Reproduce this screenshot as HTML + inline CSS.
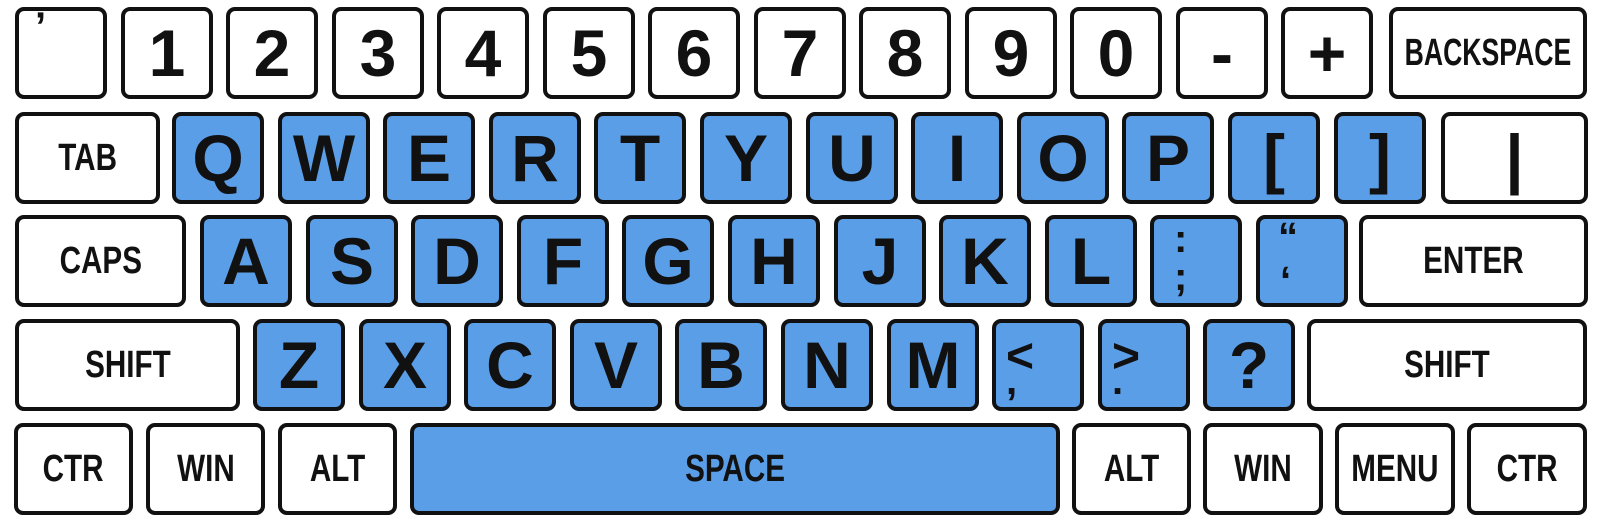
<!DOCTYPE html>
<html><head><meta charset="utf-8"><style>
body{margin:0;width:1600px;height:528px;background:#fff;position:relative;overflow:hidden;font-family:"Liberation Sans",sans-serif;}
.k{position:absolute;box-sizing:border-box;height:92px;border:4px solid #111;border-radius:9px;background:#fff;display:flex;align-items:center;justify-content:center;color:#111;font-weight:bold;}
.b{background:#5b9ee8;}
.L{font-size:66px;}
.L::first-line{}
.s{font-size:38px;display:inline-block;transform:scaleX(0.78);}
.r1{top:7px}.r2{top:112px}.r3{top:215px}.r4{top:319px}.r5{top:423px}
.w{width:92px}
.sm{position:absolute;font-size:40px;font-weight:bold;}
</style></head><body>
<div class="k r1 w" style="left:15px"><span class="sm" style="left:16px;top:-6px">’</span></div>
<div class="k r1 w L" style="left:121px">1</div>
<div class="k r1 w L" style="left:226px">2</div>
<div class="k r1 w L" style="left:332px">3</div>
<div class="k r1 w L" style="left:437px">4</div>
<div class="k r1 w L" style="left:543px">5</div>
<div class="k r1 w L" style="left:648px">6</div>
<div class="k r1 w L" style="left:754px">7</div>
<div class="k r1 w L" style="left:859px">8</div>
<div class="k r1 w L" style="left:965px">9</div>
<div class="k r1 w L" style="left:1070px">0</div>
<div class="k r1 w L" style="left:1176px">-</div>
<div class="k r1 w L" style="left:1281px">+</div>
<div class="k r1" style="left:1389px;width:198px"><span class="s" style="transform:scaleX(0.7)">BACKSPACE</span></div>

<div class="k r2" style="left:15px;width:145px"><span class="s">TAB</span></div>
<div class="k r2 w b L" style="left:172px">Q</div>
<div class="k r2 w b L" style="left:278px">W</div>
<div class="k r2 w b L" style="left:383px">E</div>
<div class="k r2 w b L" style="left:489px">R</div>
<div class="k r2 w b L" style="left:594px">T</div>
<div class="k r2 w b L" style="left:700px">Y</div>
<div class="k r2 w b L" style="left:806px">U</div>
<div class="k r2 w b L" style="left:911px">I</div>
<div class="k r2 w b L" style="left:1017px">O</div>
<div class="k r2 w b L" style="left:1122px">P</div>
<div class="k r2 w b L" style="left:1228px">[</div>
<div class="k r2 w b L" style="left:1334px">]</div>
<div class="k r2 L" style="left:1441px;width:147px">|</div>

<div class="k r3" style="left:15px;width:171px"><span class="s">CAPS</span></div>
<div class="k r3 w b L" style="left:200px">A</div>
<div class="k r3 w b L" style="left:306px">S</div>
<div class="k r3 w b L" style="left:411px">D</div>
<div class="k r3 w b L" style="left:517px">F</div>
<div class="k r3 w b L" style="left:622px">G</div>
<div class="k r3 w b L" style="left:728px">H</div>
<div class="k r3 w b L" style="left:834px">J</div>
<div class="k r3 w b L" style="left:939px">K</div>
<div class="k r3 w b L" style="left:1045px">L</div>
<div class="k r3 w b" style="left:1150px"><span class="sm" style="left:20px;top:-2px">:</span><span class="sm" style="left:20px;top:36px">;</span></div>
<div class="k r3 w b" style="left:1256px"><span class="sm" style="left:18px;top:-4px">“</span><span class="sm" style="left:20px;top:40px">‘</span></div>
<div class="k r3" style="left:1359px;width:229px"><span class="s">ENTER</span></div>

<div class="k r4" style="left:15px;width:225px"><span class="s">SHIFT</span></div>
<div class="k r4 w b L" style="left:253px">Z</div>
<div class="k r4 w b L" style="left:359px">X</div>
<div class="k r4 w b L" style="left:464px">C</div>
<div class="k r4 w b L" style="left:570px">V</div>
<div class="k r4 w b L" style="left:675px">B</div>
<div class="k r4 w b L" style="left:781px">N</div>
<div class="k r4 w b L" style="left:887px">M</div>
<div class="k r4 w b" style="left:992px"><span class="sm" style="left:10px;top:6px;font-size:48px">&lt;</span><span class="sm" style="left:10px;top:36px">,</span></div>
<div class="k r4 w b" style="left:1098px"><span class="sm" style="left:10px;top:6px;font-size:48px">&gt;</span><span class="sm" style="left:10px;top:36px">.</span></div>
<div class="k r4 w b L" style="left:1203px">?</div>
<div class="k r4" style="left:1307px;width:280px"><span class="s">SHIFT</span></div>

<div class="k r5" style="left:14px;width:119px"><span class="s">CTR</span></div>
<div class="k r5" style="left:146px;width:119px"><span class="s">WIN</span></div>
<div class="k r5" style="left:278px;width:119px"><span class="s">ALT</span></div>
<div class="k r5 b" style="left:410px;width:650px"><span class="s">SPACE</span></div>
<div class="k r5" style="left:1072px;width:119px"><span class="s">ALT</span></div>
<div class="k r5" style="left:1203px;width:120px"><span class="s">WIN</span></div>
<div class="k r5" style="left:1335px;width:120px"><span class="s">MENU</span></div>
<div class="k r5" style="left:1467px;width:120px"><span class="s">CTR</span></div>
</body></html>
